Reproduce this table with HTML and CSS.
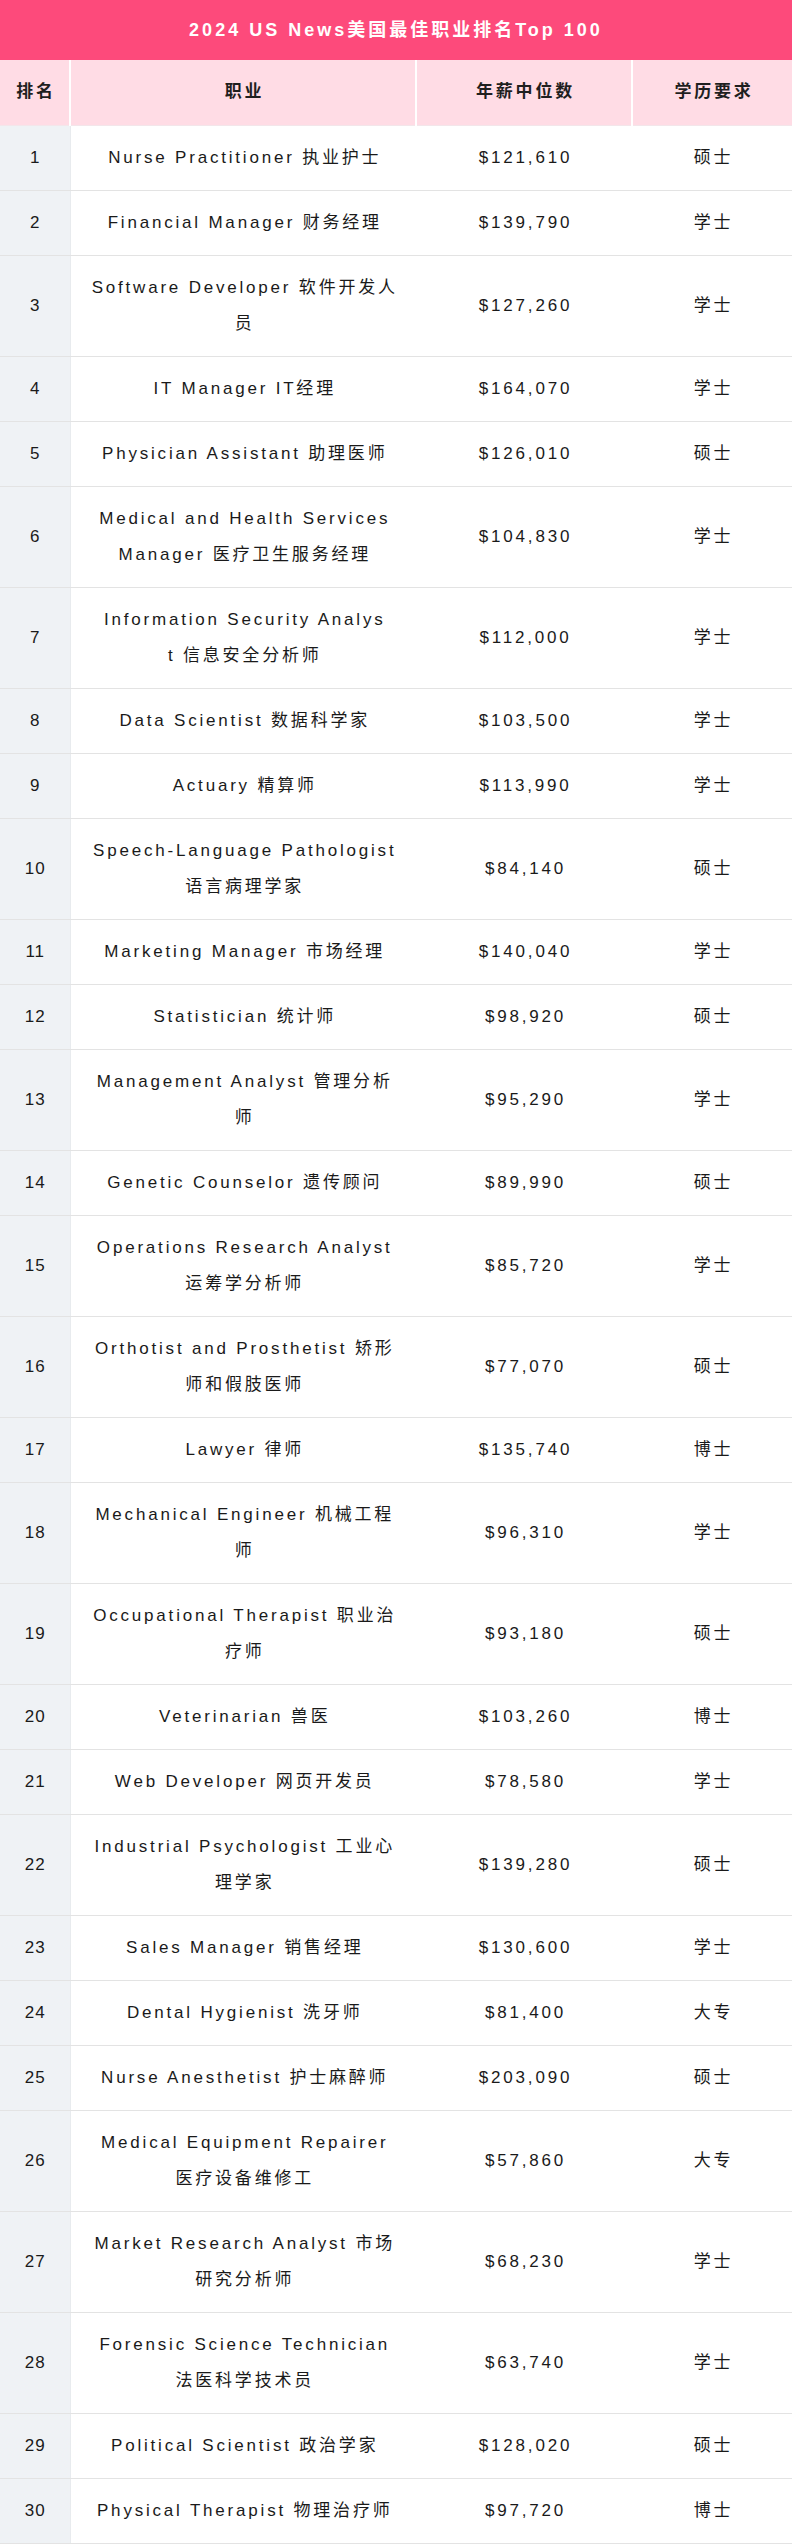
FILE: index.html
```html
<!DOCTYPE html>
<html lang="zh-CN">
<head>
<meta charset="utf-8">
<title>2024 US News美国最佳职业排名Top 100</title>
<link rel="stylesheet" href="styles.css">
</head>
<body>
<div class="sheet">
  <div class="title">2024 US News美国最佳职业排名Top 100</div>
  <table class="rank-table">
    <colgroup>
      <col class="c-rank"><col class="c-job"><col class="c-pay"><col class="c-edu">
    </colgroup>
    <thead>
      <tr><th>排名</th><th>职业</th><th>年薪中位数</th><th>学历要求</th></tr>
    </thead>
    <tbody>
      <tr><td class="rank">1</td><td>Nurse Practitioner 执业护士</td><td>$121,610</td><td>硕士</td></tr>
      <tr><td class="rank">2</td><td>Financial Manager 财务经理</td><td>$139,790</td><td>学士</td></tr>
      <tr><td class="rank">3</td><td>Software Developer 软件开发人<br>员</td><td>$127,260</td><td>学士</td></tr>
      <tr><td class="rank">4</td><td>IT Manager IT经理</td><td>$164,070</td><td>学士</td></tr>
      <tr><td class="rank">5</td><td>Physician Assistant 助理医师</td><td>$126,010</td><td>硕士</td></tr>
      <tr><td class="rank">6</td><td>Medical and Health Services<br>Manager 医疗卫生服务经理</td><td>$104,830</td><td>学士</td></tr>
      <tr><td class="rank">7</td><td>Information Security Analys<br>t 信息安全分析师</td><td>$112,000</td><td>学士</td></tr>
      <tr><td class="rank">8</td><td>Data Scientist 数据科学家</td><td>$103,500</td><td>学士</td></tr>
      <tr><td class="rank">9</td><td>Actuary 精算师</td><td>$113,990</td><td>学士</td></tr>
      <tr><td class="rank">10</td><td>Speech-Language Pathologist<br>语言病理学家</td><td>$84,140</td><td>硕士</td></tr>
      <tr><td class="rank">11</td><td>Marketing Manager 市场经理</td><td>$140,040</td><td>学士</td></tr>
      <tr><td class="rank">12</td><td>Statistician 统计师</td><td>$98,920</td><td>硕士</td></tr>
      <tr><td class="rank">13</td><td>Management Analyst 管理分析<br>师</td><td>$95,290</td><td>学士</td></tr>
      <tr><td class="rank">14</td><td>Genetic Counselor 遗传顾问</td><td>$89,990</td><td>硕士</td></tr>
      <tr><td class="rank">15</td><td>Operations Research Analyst<br>运筹学分析师</td><td>$85,720</td><td>学士</td></tr>
      <tr><td class="rank">16</td><td>Orthotist and Prosthetist 矫形<br>师和假肢医师</td><td>$77,070</td><td>硕士</td></tr>
      <tr><td class="rank">17</td><td>Lawyer 律师</td><td>$135,740</td><td>博士</td></tr>
      <tr><td class="rank">18</td><td>Mechanical Engineer 机械工程<br>师</td><td>$96,310</td><td>学士</td></tr>
      <tr><td class="rank">19</td><td>Occupational Therapist 职业治<br>疗师</td><td>$93,180</td><td>硕士</td></tr>
      <tr><td class="rank">20</td><td>Veterinarian 兽医</td><td>$103,260</td><td>博士</td></tr>
      <tr><td class="rank">21</td><td>Web Developer 网页开发员</td><td>$78,580</td><td>学士</td></tr>
      <tr><td class="rank">22</td><td>Industrial Psychologist 工业心<br>理学家</td><td>$139,280</td><td>硕士</td></tr>
      <tr><td class="rank">23</td><td>Sales Manager 销售经理</td><td>$130,600</td><td>学士</td></tr>
      <tr><td class="rank">24</td><td>Dental Hygienist 洗牙师</td><td>$81,400</td><td>大专</td></tr>
      <tr><td class="rank">25</td><td>Nurse Anesthetist 护士麻醉师</td><td>$203,090</td><td>硕士</td></tr>
      <tr><td class="rank">26</td><td>Medical Equipment Repairer<br>医疗设备维修工</td><td>$57,860</td><td>大专</td></tr>
      <tr><td class="rank">27</td><td>Market Research Analyst 市场<br>研究分析师</td><td>$68,230</td><td>学士</td></tr>
      <tr><td class="rank">28</td><td>Forensic Science Technician<br>法医科学技术员</td><td>$63,740</td><td>学士</td></tr>
      <tr><td class="rank">29</td><td>Political Scientist 政治学家</td><td>$128,020</td><td>硕士</td></tr>
      <tr><td class="rank">30</td><td>Physical Therapist 物理治疗师</td><td>$97,720</td><td>博士</td></tr>
    </tbody>
  </table>
</div>
</body>
</html>
```

FILE: styles.css
```css
html, body {
  margin: 0;
  padding: 0;
  background: #ffffff;
}

body {
  font-family: "Liberation Sans", Arial, "Noto Sans CJK SC", sans-serif;
  color: #1a1a1a;
}

.sheet {
  width: 792px;
}

.title {
  height: 60px;
  line-height: 60px;
  background: #fd4a7b;
  color: #ffffff;
  font-size: 18px;
  font-weight: bold;
  letter-spacing: 3px;
  text-align: center;
}

.rank-table {
  width: 792px;
  border-collapse: collapse;
  table-layout: fixed;
}

.c-rank { width: 70px; }
.c-job { width: 346px; }
.c-pay { width: 216px; }
.c-edu { width: 160px; }

.rank-table th,
.rank-table td {
  padding: 14px 0 14px 3px;
  line-height: 36px;
  font-size: 17px;
  letter-spacing: 2.8px;
  text-align: center;
  vertical-align: middle;
  white-space: nowrap;
}

.rank-table th {
  padding-bottom: 15px;
  background: #ffdce5;
  font-weight: bold;
  color: #1f1f1f;
  border-left: 2px solid #ffffff;
  border-bottom: 1px solid #f3e6ea;
}

.rank-table th:first-child {
  border-left: none;
}

.rank-table td {
  border-bottom: 1px solid #e3e3e3;
  color: #1a1a1a;
}

.rank-table td.rank {
  background: #eff2f5;
  border-right: 1px solid #e8ebee;
  letter-spacing: 1px;
  padding-left: 1px;
}
```
